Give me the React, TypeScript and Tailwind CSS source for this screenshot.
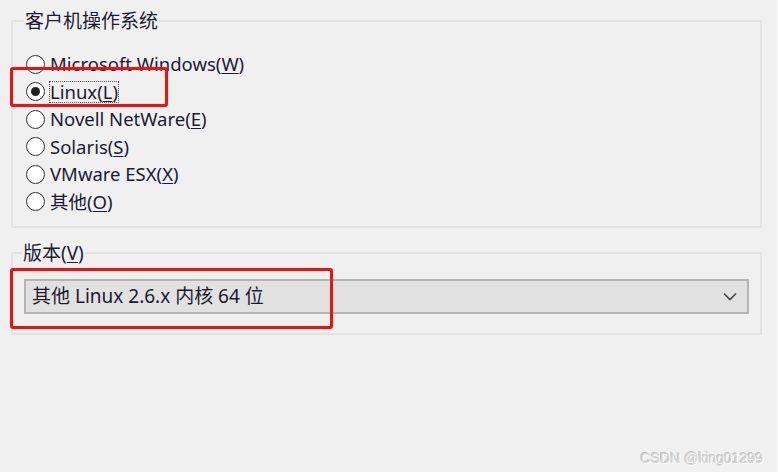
const font = {
  fontFamily: '"Noto Sans", "Noto Sans CJK SC", sans-serif',
};

const options = [
  { label: "Microsoft Windows", key: "W" },
  { label: "Linux", key: "L", checked: true },
  { label: "Novell NetWare", key: "E" },
  { label: "Solaris", key: "S" },
  { label: "VMware ESX", key: "X" },
  { label: "其他", key: "O" },
];

function Radio({ checked }: { checked?: boolean }) {
  return (
    <span className="flex h-[19px] w-[19px] shrink-0 items-center justify-center rounded-full border border-[#333] bg-white">
      {checked && <span className="h-[9px] w-[9px] rounded-full bg-[#222]" />}
    </span>
  );
}

export default function App() {
  return (
    <div
      className="relative h-[472px] w-[778px] overflow-hidden bg-[#f0f0f0] text-[#1b1b30]"
      style={font}
    >
      <div className="flex flex-col pl-[11px] pr-[16px] pt-[10px]">
        {/* group: os */}
        <fieldset className="h-[218px] border-2 border-[#e2e2e2] pl-[13px] pt-[14px]">
          <legend className="-ml-[2px] px-[1px] text-[19px] leading-[22px]">
            客户机操作系统
          </legend>
          <div className="flex flex-col gap-[7.5px] pt-[8px]">
            {options.map((o) => (
              <div key={o.key} className="flex items-center gap-[5px]">
                <Radio checked={o.checked} />
                <span
                  className={
                    "text-[18.5px] leading-[20px] " +
                    (o.checked ? "outline outline-1 outline-dotted outline-[#555]" : "")
                  }
                >
                  {o.label}(<span className="underline underline-offset-2">{o.key}</span>)
                </span>
              </div>
            ))}
          </div>
        </fieldset>

        {/* group: version */}
        <fieldset className="mt-[14px] h-[93px] border-2 border-[#e2e2e2] pl-[11px] pr-[11px] pt-[14px]">
          <legend className="-ml-[2px] px-[1px] text-[19px] leading-[22px]">
            版本(<span className="underline underline-offset-2">V</span>)
          </legend>
          <div className="mt-[1px] flex h-[35px] items-center justify-between border-2 border-[#b4b4b4] bg-[#e1e1e1] pl-[6px] pr-[10px]">
            <span className="text-[19px]">其他 Linux 2.6.x 内核 64 位</span>
            <svg width="14" height="9" viewBox="0 0 14 9" fill="none">
              <path d="M1 1.5 L7 7.5 L13 1.5" stroke="#444" strokeWidth="1.6" />
            </svg>
          </div>
        </fieldset>
      </div>

      {/* annotations */}
      <div className="absolute left-[10px] top-[67px] h-[40px] w-[158px] rounded-[3px] border-[3px] border-[#f01010]" />
      <div className="absolute left-[10px] top-[268px] h-[61px] w-[323px] rounded-[3px] border-[3px] border-[#f01010]" />

      <div
        className="absolute right-[15px] top-[448px] text-[14px] text-[#d4d4d4]"
        style={{ textShadow: "1px 1px 0 #ffffff, -1px -1px 0 #c0c0c0", fontFamily: '"Liberation Sans", sans-serif' }}
      >
        CSDN @king01299
      </div>
      <div className="absolute right-0 top-0 h-full w-[1px] bg-white" />
    </div>
  );
}
